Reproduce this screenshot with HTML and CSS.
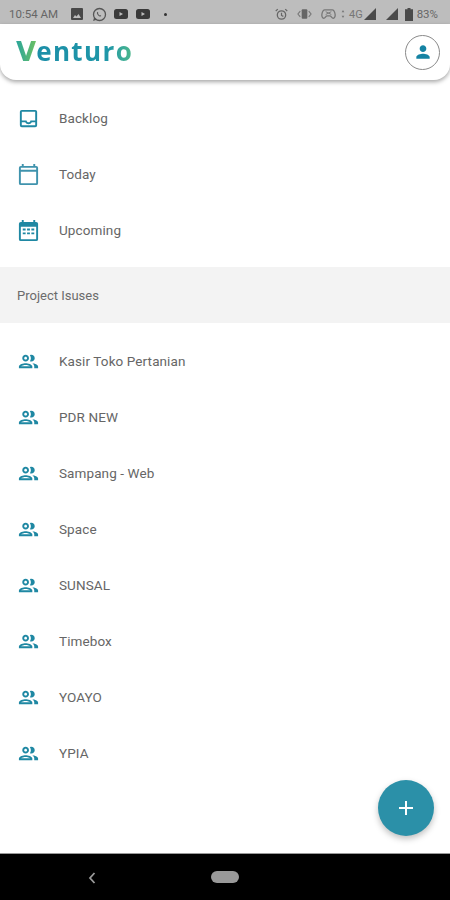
FILE: index.html
```html
<!DOCTYPE html>
<html lang="en">
<head>
  <meta charset="UTF-8" />
  <meta name="viewport" content="width=device-width, initial-scale=1.0"/>
  <title>Venturo</title>
  <link rel="stylesheet" href="styles.css">
</head>
<body>
  <svg class="defs" width="0" height="0">
    <symbol id="group" viewBox="0 0 24 24">
      <path d="M9 13.75c-2.34 0-7 1.17-7 3.5V19h14v-1.75c0-2.33-4.66-3.5-7-3.5zM4.34 17c.84-.58 2.87-1.25 4.66-1.25s3.82.67 4.66 1.25H4.34zM9 12c1.93 0 3.5-1.57 3.5-3.5S10.93 5 9 5 5.5 6.57 5.5 8.5 7.07 12 9 12zm0-5c.83 0 1.5.67 1.5 1.5S9.83 10 9 10s-1.5-.67-1.5-1.5S8.17 7 9 7zm7.04 6.81c1.16.84 1.96 1.96 1.96 3.44V19h4v-1.75c0-2.02-3.5-3.17-5.96-3.44zM15 12c1.93 0 3.5-1.57 3.5-3.5S16.93 5 15 5c-.54 0-1.04.13-1.5.35.63.89 1 1.98 1 3.15s-.37 2.26-1 3.15c.46.22.96.35 1.5.35z"/>
    </symbol>
  </svg>

  <div class="screen">
    <div class="statusbar">
      <div class="status-left">
        <span class="clock">10:54 AM</span>
        <svg class="sicon image-ic" viewBox="0 0 12 12"><path d="M1 0h10a1 1 0 0 1 1 1v10a1 1 0 0 1-1 1H1a1 1 0 0 1-1-1V1a1 1 0 0 1 1-1zm1 10h8L7.500 6 5.500 8.500 4 7z"/></svg>
        <svg class="sicon whatsapp" viewBox="0 0 14 14"><circle cx="7" cy="7" r="5.600" fill="none" stroke="#555" stroke-width="1.200"/><path d="M1 13l1-3.500 2.500 2.500z" fill="#555"/><path d="M5 4.500c-.8.800-.4 2 .6 3.100s2.200 1.700 3.100.9l-1-1-.7.400-1.400-1.500.4-.8z" fill="#555"/></svg>
        <svg class="sicon yt" viewBox="0 0 14 10"><rect width="14" height="10" rx="2.500" fill="#3a3a3a"/><path d="M5.500 3l3.500 2-3.500 2z" fill="#bdbdbd"/></svg>
        <svg class="sicon yt" viewBox="0 0 14 10"><rect width="14" height="10" rx="2.500" fill="#3a3a3a"/><path d="M5.500 3l3.500 2-3.500 2z" fill="#bdbdbd"/></svg>
        <span class="dot"></span>
      </div>
      <div class="status-right">
        <svg class="sicon alarm" viewBox="0 0 14 14"><circle cx="7" cy="7.500" r="4.500" fill="none" stroke="#666" stroke-width="1.400"/><path d="M7 5v3l2 1M.8 3.200L3 1.200M13.200 3.200L11 1.200" fill="none" stroke="#666" stroke-width="1.300"/></svg>
        <svg class="sicon vibrate" viewBox="0 0 16 12"><rect x="5" y="1" width="6" height="10" rx="1" fill="#666"/><path d="M3.500 3L1 6l2.500 3M12.500 3L15 6l-2.500 3" fill="none" stroke="#777" stroke-width="1.200"/></svg>
        <svg class="sicon game" viewBox="0 0 16 12"><path d="M4 1.500h8c1.500 0 2.500 1.500 3 4.500.4 2.500-.5 4.500-2 4.500-1.500 0-2-2.500-3.500-2.500h-3C5 8 4.500 10.500 3 10.500 1.500 10.500.6 8.500 1 6c.5-3 1.500-4.500 3-4.500z" fill="none" stroke="#777" stroke-width="1.400"/><path d="M5 3.500l6 3M11 3.500l-6 3" stroke="#777" stroke-width="1"/></svg>
        <svg class="sicon arrows" viewBox="0 0 6 12"><path d="M3 0l2 3.500H1zM3 12L1 8.500h4z" fill="#777"/></svg>
        <span class="net">4G</span>
        <svg class="sicon signal" viewBox="0 0 12 12"><path d="M12 0v12H0z" fill="#4a4a4a"/></svg>
        <svg class="sicon signal signal-two" viewBox="0 0 12 12"><path d="M12 0v12H0z" fill="#4a4a4a"/></svg>
        <svg class="sicon battery" viewBox="0 0 8 13"><path d="M2.500 0h3v1.300H8V13H0V1.300h2.500z" fill="#4a4a4a"/></svg>
        <span class="pct">83%</span>
      </div>
    </div>

    <header class="appbar">
      <span class="logo"><span class="logo-v">V</span><span class="logo-rest">enturo</span></span>
      <button class="avatar" aria-label="Account">
        <svg viewBox="0 0 24 24" width="20" height="20"><path d="M12 12c2.210 0 4-1.790 4-4s-1.790-4-4-4-4 1.790-4 4 1.790 4 4 4zm0 2c-2.670 0-8 1.340-8 4v2h16v-2c0-2.660-5.330-4-8-4z"/></svg>
      </button>
    </header>

    <main class="content">
      <ul class="list list-top">
        <li class="row">
          <svg class="row-icon" viewBox="0 0 24 24"><path d="M19 3H5a2 2 0 0 0-2 2v14a2 2 0 0 0 2 2h14a2 2 0 0 0 2-2V5a2 2 0 0 0-2-2zm0 16H5v-3h3.560c.69 1.190 1.970 2 3.450 2s2.750-.81 3.450-2H19v3zm0-5h-4.990c0 1.100-.9 2-2 2s-2-.9-2-2H5V5h14v9z"/></svg>
          <span>Backlog</span>
        </li>
        <li class="row">
          <svg class="row-icon row-icon-light" viewBox="0 0 24 24"><path d="M20 3h-1V1h-2v2H7V1H5v2H4a2 2 0 0 0-2 2v16a2 2 0 0 0 2 2h16a2 2 0 0 0 2-2V5a2 2 0 0 0-2-2zm0 18H4V9h16v12zm0-14H4V5h16v2z"/></svg>
          <span>Today</span>
        </li>
        <li class="row">
          <svg class="row-icon" viewBox="0 0 24 24"><path d="M20 3h-1V1h-2v2H7V1H5v2H4a2 2 0 0 0-2 2v16a2 2 0 0 0 2 2h16a2 2 0 0 0 2-2V5a2 2 0 0 0-2-2zm0 18H4V8h16v13zM6 10h3v2H6zm4.500 0h3v2h-3zm4.500 0h3v2h-3zM6 14h3v2H6zm4.500 0h3v2h-3zm4.500 0h3v2h-3z"/></svg>
          <span>Upcoming</span>
        </li>
      </ul>

      <div class="section-title">Project Isuses</div>

      <ul class="list">
        <li class="row"><svg class="row-icon"><use href="#group"/></svg><span>Kasir Toko Pertanian</span></li>
        <li class="row"><svg class="row-icon"><use href="#group"/></svg><span>PDR NEW</span></li>
        <li class="row"><svg class="row-icon"><use href="#group"/></svg><span>Sampang - Web</span></li>
        <li class="row"><svg class="row-icon"><use href="#group"/></svg><span>Space</span></li>
        <li class="row"><svg class="row-icon"><use href="#group"/></svg><span>SUNSAL</span></li>
        <li class="row"><svg class="row-icon"><use href="#group"/></svg><span>Timebox</span></li>
        <li class="row"><svg class="row-icon"><use href="#group"/></svg><span>YOAYO</span></li>
        <li class="row"><svg class="row-icon"><use href="#group"/></svg><span>YPIA</span></li>
      </ul>

      <button class="fab" aria-label="Add">
        <svg viewBox="0 0 16 16" width="16" height="16"><path d="M7 1h2v6h6v2H9v6H7V9H1V7h6z"/></svg>
      </button>
    </main>

    <nav class="navbar">
      <svg class="nav-back" viewBox="0 0 8 12" width="8" height="12"><path d="M6.500 1L2 6l4.500 5" fill="none" stroke="#9a9a9a" stroke-width="1.800"/></svg>
      <span class="nav-home"></span>
    </nav>
  </div>
</body>
</html>
```

FILE: styles.css
```css
* {
  box-sizing: border-box;
}

body {
  margin: 0;
  font-family: Roboto, 'Liberation Sans', sans-serif;
  background-color: #fff;
  color: #555;
}

.defs {
  position: absolute;
}

.screen {
  display: flex;
  flex-direction: column;
  height: 900px;
  overflow: hidden;
}

/* status bar */
.statusbar {
  display: flex;
  justify-content: space-between;
  align-items: center;
  height: 24px;
  padding: 4px 12px 0 9px;
  background-color: #bdbdbd;
  color: #666;
  font-size: 11.500px;
  flex-shrink: 0;
}

.status-left,
.status-right {
  display: flex;
  align-items: center;
}

.clock {
  margin-right: 13px;
}

.sicon {
  display: block;
}

.image-ic {
  width: 12px;
  height: 12px;
  margin-right: 9px;
  fill: #484848;
}

.whatsapp {
  width: 15px;
  height: 15px;
  margin-right: 7px;
}

.yt {
  width: 14px;
  height: 10px;
  margin-right: 8px;
}

.dot {
  width: 3px;
  height: 3px;
  margin-left: 6px;
  border-radius: 50%;
  background-color: #333;
}

.alarm {
  width: 13px;
  height: 13px;
  margin-right: 9px;
}

.vibrate {
  width: 15px;
  height: 12px;
  margin-right: 9px;
}

.game {
  width: 15px;
  height: 12px;
  margin-right: 5px;
}

.arrows {
  width: 4px;
  height: 10px;
  margin-right: 4px;
}

.net {
  font-size: 11px;
  color: #777;
  margin-right: 1px;
}

.signal {
  width: 12px;
  height: 12px;
}

.signal-two {
  margin-left: 10px;
  margin-right: 7px;
}

.battery {
  width: 8px;
  height: 13px;
  margin-right: 4px;
}

.pct {
  font-size: 11.500px;
  color: #666;
}

/* app bar */
.appbar {
  display: flex;
  justify-content: space-between;
  align-items: center;
  height: 56px;
  padding: 0 10px 0 16px;
  background-color: #fff;
  border-radius: 0 0 16px 16px;
  box-shadow: 0 2px 4px rgba(0, 0, 0, 0.35);
  flex-shrink: 0;
  position: relative;
}

.logo {
  font-family: 'Open Sans', sans-serif;
  font-size: 26px;
  font-weight: 700;
  line-height: 1;
  letter-spacing: 1.400px;
  margin-top: -2px;
}

.logo-v {
  font-family: 'DejaVu Sans', sans-serif;
  font-weight: 700;
  letter-spacing: 0;
  background: linear-gradient(90deg, #2aa59c 0%, #6cc062 100%);
  -webkit-background-clip: text;
  background-clip: text;
  color: transparent;
}

.logo-rest {
  background: linear-gradient(90deg, #1c8ea8 0%, #1f97a8 75%, #4fb98a 100%);
  -webkit-background-clip: text;
  background-clip: text;
  color: transparent;
}

.avatar {
  display: flex;
  align-items: center;
  justify-content: center;
  width: 35px;
  height: 35px;
  padding: 0;
  background: none;
  border: 1px solid #8a8a8a;
  border-radius: 50%;
  fill: #1583a3;
}

/* lists */
.content {
  flex: 1;
  position: relative;
}

.list {
  list-style: none;
  margin: 0;
  padding: 10px 0;
}

.list-top {
  padding-bottom: 9px;
}

.row {
  display: flex;
  align-items: center;
  height: 56px;
  padding-left: 17px;
  font-size: 13.500px;
  letter-spacing: 0.1px;
  color: #666;
}

.row-icon {
  width: 23px;
  height: 23px;
  margin-right: 19px;
  fill: #1f88a3;
  flex-shrink: 0;
}

.row-icon-light {
  fill: #3f93ad;
}

.section-title {
  display: flex;
  align-items: center;
  height: 56px;
  padding-left: 17px;
  background-color: #f3f3f3;
  font-size: 13px;
  color: #6b6b6b;
}

.fab {
  position: absolute;
  right: 16px;
  bottom: 17px;
  display: flex;
  align-items: center;
  justify-content: center;
  width: 56px;
  height: 56px;
  padding: 0;
  border: none;
  border-radius: 50%;
  background-color: #2b90a8;
  fill: #fff;
  box-shadow: 0 3px 6px rgba(0, 0, 0, 0.25);
}

/* nav bar */
.navbar {
  position: relative;
  display: flex;
  align-items: center;
  justify-content: center;
  height: 47px;
  background-color: #000;
  border-top: 1px solid #999;
  flex-shrink: 0;
}

.nav-back {
  position: absolute;
  left: 88px;
  top: 18px;
}

.nav-home {
  width: 28px;
  height: 12px;
  border-radius: 6px;
  background-color: #999;
}
```
